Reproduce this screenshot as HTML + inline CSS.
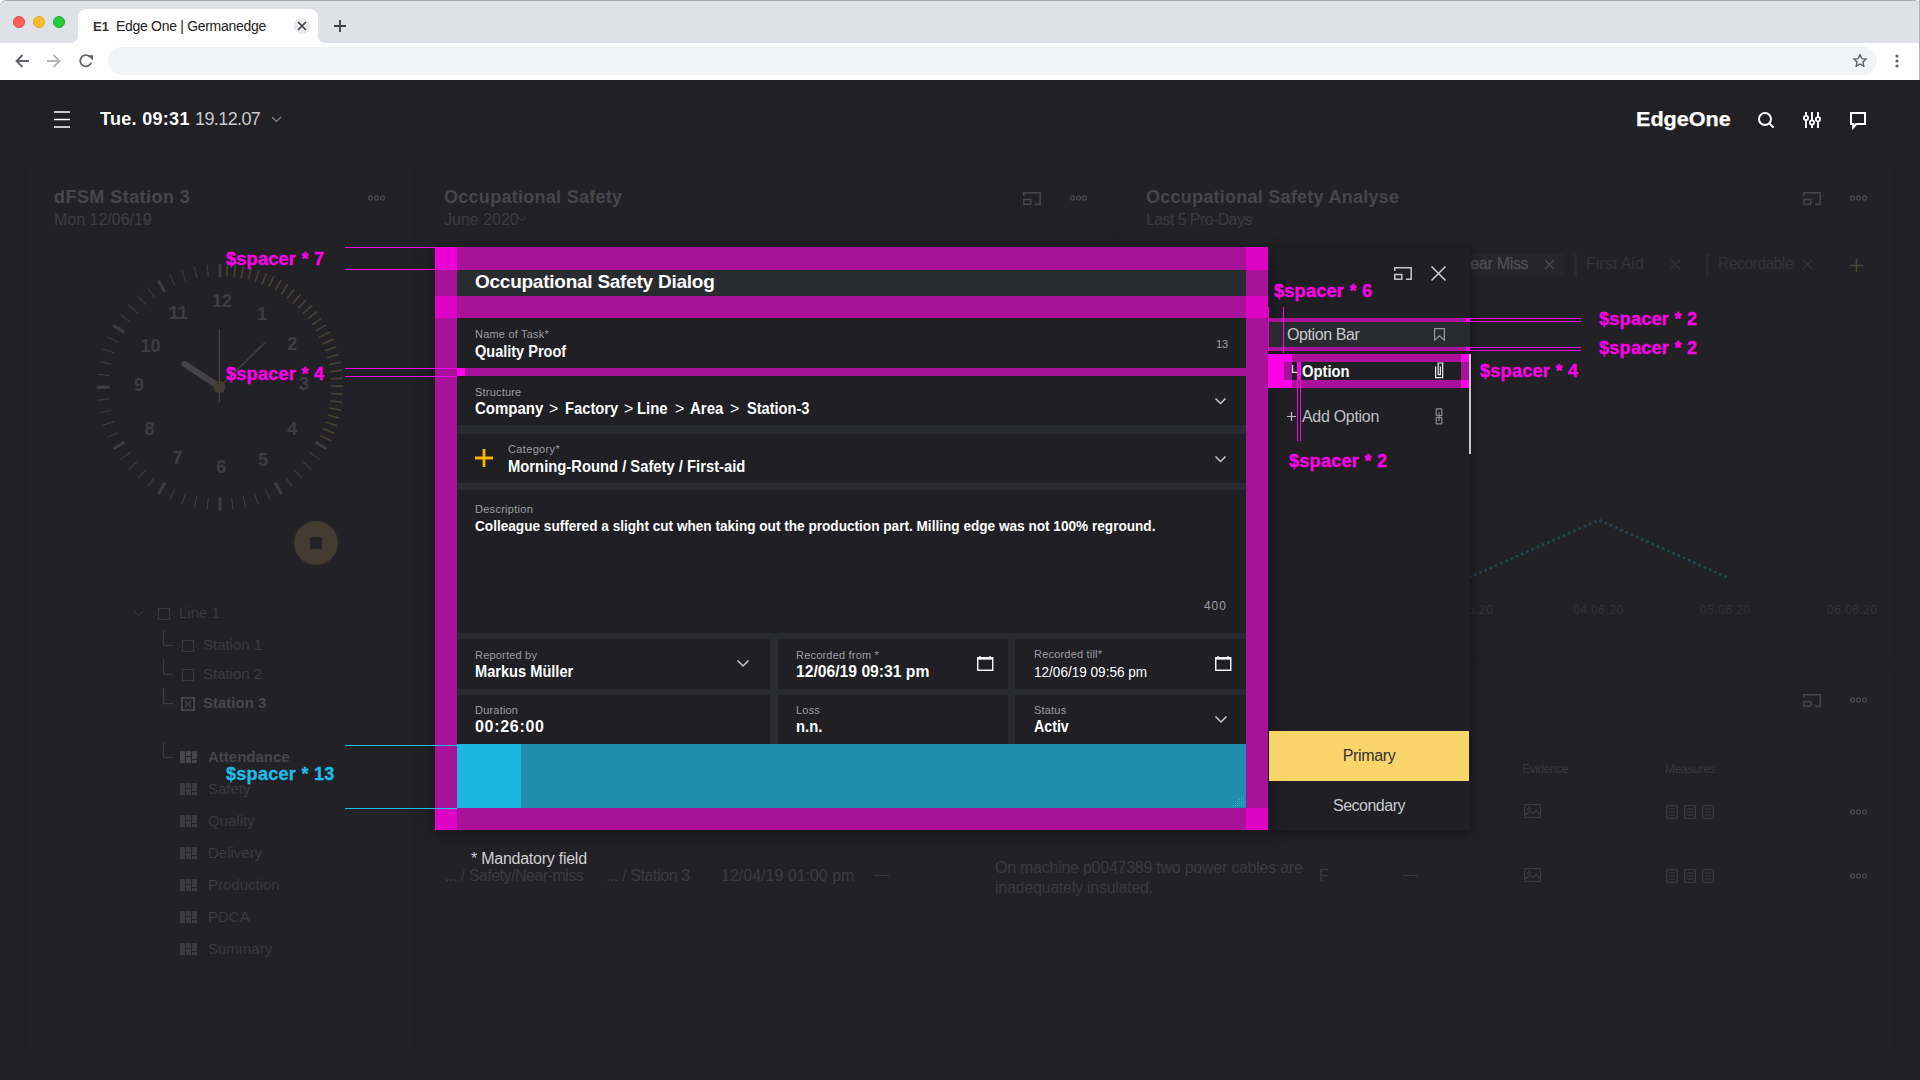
<!DOCTYPE html>
<html><head><meta charset="utf-8">
<style>
*{margin:0;padding:0;box-sizing:border-box}
html,body{width:1920px;height:1080px;overflow:hidden;background:#212025;font-family:"Liberation Sans",sans-serif}
.a{position:absolute}
.t{position:absolute;white-space:nowrap;line-height:1}
svg{position:absolute;overflow:visible}
/* chrome */
#chrome{position:absolute;left:0;top:0;width:1920px;height:80px;background:#fff;z-index:10}
#tabbar{position:absolute;left:0;top:0;width:1920px;height:43px;background:#DEE1E6;border-top:1px solid #a9a9a9;border-radius:6px 6px 0 0}
.light{position:absolute;top:15px;width:12px;height:12px;border-radius:50%}
#tab{position:absolute;left:78px;top:8px;width:240px;height:34px;background:#fff;border-radius:8px 8px 0 0}
#tab:before,#tab:after{content:"";position:absolute;bottom:0;width:8px;height:8px;background:radial-gradient(circle at 0 0,#DEE1E6 8px,#fff 8.5px)}
#tab:before{left:-8px}
#tab:after{right:-8px;background:radial-gradient(circle at 100% 0,#DEE1E6 8px,#fff 8.5px)}
#addr{position:absolute;left:108px;top:47px;width:1769px;height:28px;background:#F1F3F4;border-radius:14px}
/* app */
#app{position:absolute;left:0;top:0;width:1920px;height:1080px;background:#212025}
.panel{position:absolute;background:#222126;box-shadow:0 0 1px rgba(0,0,0,.1)}
.lbl{position:absolute;white-space:nowrap;line-height:1;font-size:11px;color:#9d9da2;letter-spacing:0.2px}
.val{position:absolute;white-space:nowrap;line-height:1;font-size:16px;color:#fff;font-weight:bold}
.field{position:absolute;background:#1f1f24}
.gap{position:absolute;background:#2a2b30}
.mg{position:absolute;background:#a8129a}
.mgb{position:absolute;background:#de04c6}
.pk{position:absolute;background:#ff00e8}
.ann{position:absolute;white-space:nowrap;line-height:1;font-size:18px;font-weight:bold;color:#ff00e8;letter-spacing:0.3px;-webkit-text-stroke:0.35px currentColor}
.dimT{position:absolute;white-space:nowrap;line-height:1;color:#47464b;font-weight:bold;font-size:18px}
.dimS{position:absolute;white-space:nowrap;line-height:1;color:#3c3b40;font-size:16px}
.tree{position:absolute;white-space:nowrap;line-height:1;color:#3b3a3f;font-size:15px}
</style></head>
<body>
<div id="chrome">
  <div id="tabbar">
    <div class="light" style="left:13px;background:#FE5F57;border:1px solid #E2463F"></div>
    <div class="light" style="left:33px;background:#FEBC2E;border:1px solid #E1A325"></div>
    <div class="light" style="left:53px;background:#28C840;border:1px solid #1DAD2B"></div>
    <div id="tab">
      <div class="t" style="left:15px;top:11px;font-size:13px;font-weight:bold;color:#333">E1</div>
      <div class="t" style="left:38px;top:10px;font-size:14px;color:#222;letter-spacing:-0.3px">Edge One | Germanedge</div>
      <div class="a" style="left:216px;top:9px;width:16px;height:16px;border-radius:50%;background:#E8EAED"></div>
      <svg style="left:220px;top:13px" width="8" height="8"><path d="M0 0L8 8M8 0L0 8" stroke="#3c4043" stroke-width="1.6"/></svg>
    </div>
    <svg style="left:334px;top:19px" width="12" height="12"><path d="M6 0V12M0 6H12" stroke="#3c4043" stroke-width="1.8"/></svg>
  </div>
  <div id="addr"></div>
  <div class="a" style="left:1919px;top:0;width:1px;height:80px;background:#b3b3b3"></div>
  <svg style="left:15px;top:54px" width="14" height="14"><path d="M14 7H1.5M7.5 1L1.5 7L7.5 13" fill="none" stroke="#5f6368" stroke-width="1.8"/></svg>
  <svg style="left:47px;top:54px" width="14" height="14"><path d="M0 7H12.5M6.5 1L12.5 7L6.5 13" fill="none" stroke="#b4b6b9" stroke-width="1.8"/></svg>
  <svg style="left:79px;top:54px" width="14" height="14"><path d="M12.2 8.5A5.6 5.6 0 1 1 10.8 2.8" fill="none" stroke="#5f6368" stroke-width="1.8"/><path d="M8.6 1.2H14V6.6Z" fill="#5f6368"/></svg>
  <svg style="left:1852px;top:53px" width="16" height="16"><path d="M8 1.5L9.9 5.6L14.2 6L10.9 8.9L11.9 13.3L8 11L4.1 13.3L5.1 8.9L1.8 6L6.1 5.6Z" fill="none" stroke="#5f6368" stroke-width="1.4" stroke-linejoin="round"/></svg>
  <svg style="left:1895px;top:54px" width="4" height="14"><circle cx="2" cy="2" r="1.6" fill="#5f6368"/><circle cx="2" cy="7" r="1.6" fill="#5f6368"/><circle cx="2" cy="12" r="1.6" fill="#5f6368"/></svg>
</div>
<div id="app">
<svg style="left:54px;top:111px" width="16" height="17"><path d="M0 1H16M0 8.5H16M0 16H16" stroke="#fff" stroke-width="1.6"/></svg>
<div class="t" style="left:100px;top:110px;font-size:18px;font-weight:bold;color:#fff;letter-spacing:0.3px">Tue. 09:31</div>
<div class="t" style="left:195px;top:110px;font-size:18px;color:#c9c9cc;letter-spacing:-0.6px">19.12.07</div>
<svg style="left:272px;top:117px" width="9" height="5"><path d="M0 0L4.5 4.5L9 0" fill="none" stroke="#8a8a8e" stroke-width="1.1"/></svg>
<div class="t" style="left:1636px;top:109px;font-size:20px;font-weight:bold;color:#fff;transform:scaleX(1.08);transform-origin:0 0;-webkit-text-stroke:0.25px #fff">EdgeOne</div>
<svg style="left:1758px;top:112px" width="17" height="17"><circle cx="7" cy="7" r="6" fill="none" stroke="#fff" stroke-width="2"/><path d="M11.4 11.4L15.6 15.6" stroke="#fff" stroke-width="2"/></svg>
<svg style="left:1803px;top:112px" width="18" height="16"><path d="M3 0V16M9 0V16M15 0V16" stroke="#fff" stroke-width="1.9"/><circle cx="3" cy="6" r="2.1" fill="#212025" stroke="#fff" stroke-width="1.8"/><circle cx="9" cy="10.4" r="2.1" fill="#212025" stroke="#fff" stroke-width="1.8"/><circle cx="15" cy="7.2" r="2.1" fill="#212025" stroke="#fff" stroke-width="1.8"/></svg>
<svg style="left:1850px;top:112px" width="16" height="17"><path d="M1 1H15V12H6.2L3.2 15.5V12H1Z" fill="none" stroke="#fff" stroke-width="2" stroke-linejoin="miter"/></svg>

<div class="panel" style="left:27px;top:164px;width:385px;height:888px"></div>
<div class="panel" style="left:418px;top:164px;width:694px;height:495px"></div>
<div class="panel" style="left:1120px;top:164px;width:772px;height:495px"></div>
<div class="panel" style="left:418px;top:666px;width:1474px;height:386px"></div>
<!-- left panel content -->
<div class="dimT" style="left:54px;top:188px;letter-spacing:0.45px">dFSM Station 3</div>
<div class="dimS" style="left:54px;top:212px;color:#3e3d42">Mon 12/06/19</div>
<svg style="left:143px;top:219px" width="8" height="5"><path d="M0 0L4 4L8 0" fill="none" stroke="#3e3d42" stroke-width="1"/></svg>
<svg style="left:368px;top:195px" width="17" height="6"><circle cx="2.5" cy="3" r="2" fill="none" stroke="#47464b" stroke-width="1.3"/><circle cx="8.5" cy="3" r="2" fill="none" stroke="#47464b" stroke-width="1.3"/><circle cx="14.5" cy="3" r="2" fill="none" stroke="#47464b" stroke-width="1.3"/></svg>
<svg id="clock" style="left:0;top:0" width="440" height="600"><line x1="220.00" y1="277.00" x2="220.00" y2="264.00" stroke="#3e3d42" stroke-width="3.0"/><line x1="315.44" y1="442.30" x2="326.69" y2="448.80" stroke="#3e3d42" stroke-width="3.0"/><line x1="309.96" y1="452.56" x2="319.67" y2="459.62" stroke="#3e3d42" stroke-width="1.1"/><line x1="302.64" y1="461.61" x2="311.56" y2="469.64" stroke="#3e3d42" stroke-width="1.1"/><line x1="294.41" y1="469.84" x2="302.44" y2="478.76" stroke="#3e3d42" stroke-width="1.1"/><line x1="285.36" y1="477.16" x2="292.42" y2="486.87" stroke="#3e3d42" stroke-width="1.1"/><line x1="275.10" y1="482.64" x2="281.60" y2="493.89" stroke="#3e3d42" stroke-width="3.0"/><line x1="265.23" y1="488.79" x2="270.11" y2="499.75" stroke="#3e3d42" stroke-width="1.1"/><line x1="254.36" y1="492.96" x2="258.07" y2="504.37" stroke="#3e3d42" stroke-width="1.1"/><line x1="243.12" y1="495.97" x2="245.61" y2="507.71" stroke="#3e3d42" stroke-width="1.1"/><line x1="231.62" y1="497.79" x2="232.88" y2="509.73" stroke="#3e3d42" stroke-width="1.1"/><line x1="220.00" y1="497.40" x2="220.00" y2="510.40" stroke="#3e3d42" stroke-width="3.0"/><line x1="208.38" y1="497.79" x2="207.12" y2="509.73" stroke="#3e3d42" stroke-width="1.1"/><line x1="196.88" y1="495.97" x2="194.39" y2="507.71" stroke="#3e3d42" stroke-width="1.1"/><line x1="185.64" y1="492.96" x2="181.93" y2="504.37" stroke="#3e3d42" stroke-width="1.1"/><line x1="174.77" y1="488.79" x2="169.89" y2="499.75" stroke="#3e3d42" stroke-width="1.1"/><line x1="164.90" y1="482.64" x2="158.40" y2="493.89" stroke="#3e3d42" stroke-width="3.0"/><line x1="154.64" y1="477.16" x2="147.58" y2="486.87" stroke="#3e3d42" stroke-width="1.1"/><line x1="145.59" y1="469.84" x2="137.56" y2="478.76" stroke="#3e3d42" stroke-width="1.1"/><line x1="137.36" y1="461.61" x2="128.44" y2="469.64" stroke="#3e3d42" stroke-width="1.1"/><line x1="130.04" y1="452.56" x2="120.33" y2="459.62" stroke="#3e3d42" stroke-width="1.1"/><line x1="124.56" y1="442.30" x2="113.31" y2="448.80" stroke="#3e3d42" stroke-width="3.0"/><line x1="118.41" y1="432.43" x2="107.45" y2="437.31" stroke="#3e3d42" stroke-width="1.1"/><line x1="114.24" y1="421.56" x2="102.83" y2="425.27" stroke="#3e3d42" stroke-width="1.1"/><line x1="111.23" y1="410.32" x2="99.49" y2="412.81" stroke="#3e3d42" stroke-width="1.1"/><line x1="109.41" y1="398.82" x2="97.47" y2="400.08" stroke="#3e3d42" stroke-width="1.1"/><line x1="109.80" y1="387.20" x2="96.80" y2="387.20" stroke="#3e3d42" stroke-width="3.0"/><line x1="109.41" y1="375.58" x2="97.47" y2="374.32" stroke="#3e3d42" stroke-width="1.1"/><line x1="111.23" y1="364.08" x2="99.49" y2="361.59" stroke="#3e3d42" stroke-width="1.1"/><line x1="114.24" y1="352.84" x2="102.83" y2="349.13" stroke="#3e3d42" stroke-width="1.1"/><line x1="118.41" y1="341.97" x2="107.45" y2="337.09" stroke="#3e3d42" stroke-width="1.1"/><line x1="124.56" y1="332.10" x2="113.31" y2="325.60" stroke="#3e3d42" stroke-width="3.0"/><line x1="130.04" y1="321.84" x2="120.33" y2="314.78" stroke="#3e3d42" stroke-width="1.1"/><line x1="137.36" y1="312.79" x2="128.44" y2="304.76" stroke="#3e3d42" stroke-width="1.1"/><line x1="145.59" y1="304.56" x2="137.56" y2="295.64" stroke="#3e3d42" stroke-width="1.1"/><line x1="154.64" y1="297.24" x2="147.58" y2="287.53" stroke="#3e3d42" stroke-width="1.1"/><line x1="164.90" y1="291.76" x2="158.40" y2="280.51" stroke="#3e3d42" stroke-width="3.0"/><line x1="174.77" y1="285.61" x2="169.89" y2="274.65" stroke="#3e3d42" stroke-width="1.1"/><line x1="185.64" y1="281.44" x2="181.93" y2="270.03" stroke="#3e3d42" stroke-width="1.1"/><line x1="196.88" y1="278.43" x2="194.39" y2="266.69" stroke="#3e3d42" stroke-width="1.1"/><line x1="208.38" y1="276.61" x2="207.12" y2="264.67" stroke="#3e3d42" stroke-width="1.1"/><line x1="226.79" y1="276.21" x2="227.52" y2="264.23" stroke="#4a4333" stroke-width="1.6"/><line x1="234.01" y1="276.89" x2="235.53" y2="264.98" stroke="#4a4333" stroke-width="1.6"/><line x1="241.18" y1="278.04" x2="243.47" y2="266.26" stroke="#4a4333" stroke-width="1.6"/><line x1="248.26" y1="279.65" x2="251.30" y2="268.04" stroke="#4a4333" stroke-width="1.6"/><line x1="255.21" y1="281.72" x2="259.01" y2="270.34" stroke="#4a4333" stroke-width="1.6"/><line x1="262.02" y1="284.24" x2="266.55" y2="273.13" stroke="#4a4333" stroke-width="1.6"/><line x1="268.64" y1="287.20" x2="273.89" y2="276.41" stroke="#4a4333" stroke-width="1.6"/><line x1="275.06" y1="290.59" x2="281.00" y2="280.16" stroke="#4a4333" stroke-width="1.6"/><line x1="281.25" y1="294.39" x2="287.86" y2="284.37" stroke="#4a4333" stroke-width="1.6"/><line x1="287.17" y1="298.58" x2="294.42" y2="289.02" stroke="#4a4333" stroke-width="1.6"/><line x1="292.81" y1="303.15" x2="300.66" y2="294.08" stroke="#4a4333" stroke-width="1.6"/><line x1="298.13" y1="308.08" x2="306.57" y2="299.54" stroke="#4a4333" stroke-width="1.6"/><line x1="303.13" y1="313.34" x2="312.10" y2="305.37" stroke="#4a4333" stroke-width="1.6"/><line x1="307.77" y1="318.92" x2="317.24" y2="311.55" stroke="#4a4333" stroke-width="1.6"/><line x1="312.04" y1="324.79" x2="321.97" y2="318.06" stroke="#4a4333" stroke-width="1.6"/><line x1="315.91" y1="330.93" x2="326.26" y2="324.86" stroke="#4a4333" stroke-width="1.6"/><line x1="319.38" y1="337.31" x2="330.10" y2="331.92" stroke="#4a4333" stroke-width="1.6"/><line x1="322.42" y1="343.89" x2="333.47" y2="339.22" stroke="#4a4333" stroke-width="1.6"/><line x1="325.03" y1="350.67" x2="336.36" y2="346.72" stroke="#4a4333" stroke-width="1.6"/><line x1="327.19" y1="357.60" x2="338.75" y2="354.40" stroke="#4a4333" stroke-width="1.6"/><line x1="328.89" y1="364.65" x2="340.64" y2="362.22" stroke="#4a4333" stroke-width="1.6"/><line x1="330.13" y1="371.80" x2="342.01" y2="370.14" stroke="#4a4333" stroke-width="1.6"/><line x1="330.90" y1="379.02" x2="342.87" y2="378.13" stroke="#4a4333" stroke-width="1.6"/><line x1="331.20" y1="386.27" x2="343.20" y2="386.17" stroke="#4a4333" stroke-width="1.6"/><line x1="331.02" y1="393.52" x2="343.00" y2="394.21" stroke="#4a4333" stroke-width="1.6"/><line x1="330.37" y1="400.75" x2="342.28" y2="402.21" stroke="#4a4333" stroke-width="1.6"/><line x1="329.25" y1="407.92" x2="341.04" y2="410.16" stroke="#4a4333" stroke-width="1.6"/><line x1="327.67" y1="415.00" x2="339.29" y2="418.01" stroke="#4a4333" stroke-width="1.6"/><line x1="325.62" y1="421.97" x2="337.02" y2="425.72" stroke="#4a4333" stroke-width="1.6"/><line x1="323.13" y1="428.78" x2="334.26" y2="433.27" stroke="#4a4333" stroke-width="1.6"/><line x1="320.20" y1="435.42" x2="331.01" y2="440.63" stroke="#4a4333" stroke-width="1.6"/><text x="222.0" y="307.1" text-anchor="middle" font-family="Liberation Sans" font-weight="bold" font-size="18" fill="#3e3d42">12</text><text x="178.3" y="319.2" text-anchor="middle" font-family="Liberation Sans" font-weight="bold" font-size="18" fill="#3e3d42">11</text><text x="150.5" y="351.9" text-anchor="middle" font-family="Liberation Sans" font-weight="bold" font-size="18" fill="#3e3d42">10</text><text x="138.9" y="391.0" text-anchor="middle" font-family="Liberation Sans" font-weight="bold" font-size="18" fill="#3e3d42">9</text><text x="262.2" y="319.9" text-anchor="middle" font-family="Liberation Sans" font-weight="bold" font-size="18" fill="#3e3d42">1</text><text x="292.2" y="349.9" text-anchor="middle" font-family="Liberation Sans" font-weight="bold" font-size="18" fill="#3e3d42">2</text><text x="303.9" y="389.9" text-anchor="middle" font-family="Liberation Sans" font-weight="bold" font-size="18" fill="#3e3d42">3</text><text x="292.2" y="435.1" text-anchor="middle" font-family="Liberation Sans" font-weight="bold" font-size="18" fill="#3e3d42">4</text><text x="263.3" y="466.2" text-anchor="middle" font-family="Liberation Sans" font-weight="bold" font-size="18" fill="#3e3d42">5</text><text x="221.2" y="472.9" text-anchor="middle" font-family="Liberation Sans" font-weight="bold" font-size="18" fill="#3e3d42">6</text><text x="177.6" y="464.3" text-anchor="middle" font-family="Liberation Sans" font-weight="bold" font-size="18" fill="#3e3d42">7</text><text x="149.6" y="435.0" text-anchor="middle" font-family="Liberation Sans" font-weight="bold" font-size="18" fill="#3e3d42">8</text><line x1="219.4" y1="386.9" x2="184.4" y2="363.9" stroke="#444349" stroke-width="6.2" stroke-linecap="round"/><line x1="219.4" y1="386.9" x2="266.1" y2="341.7" stroke="#404045" stroke-width="1.5"/><line x1="219.4" y1="328.9" x2="219.4" y2="402.4" stroke="#4a4232" stroke-width="1.2"/><circle cx="219.4" cy="386.9" r="6" fill="#433b2f"/></svg>
<div class="a" style="left:294px;top:521px;width:44px;height:44px;border-radius:50%;background:#433b2f"></div>
<div class="a" style="left:310px;top:537px;width:12px;height:12px;background:#222126"></div>
<!-- tree -->
<svg style="left:134px;top:611px" width="9" height="5"><path d="M0 0L4.5 4.5L9 0" fill="none" stroke="#3b3a3f" stroke-width="1"/></svg>
<div class="a" style="left:158px;top:608px;width:12px;height:12px;border:1.3px solid #3b3a3f"></div>
<div class="tree" style="left:179px;top:605px">Line 1</div>
<svg style="left:163px;top:630px" width="10" height="16"><path d="M0.6 0V15.4H10" fill="none" stroke="#3b3a3f" stroke-width="1.2"/></svg>
<div class="a" style="left:182px;top:640px;width:12px;height:12px;border:1.3px solid #3b3a3f"></div>
<div class="tree" style="left:203px;top:637px">Station 1</div>
<svg style="left:163px;top:659px" width="10" height="16"><path d="M0.6 0V15.4H10" fill="none" stroke="#3b3a3f" stroke-width="1.2"/></svg>
<div class="a" style="left:182px;top:669px;width:12px;height:12px;border:1.3px solid #3b3a3f"></div>
<div class="tree" style="left:203px;top:666px">Station 2</div>
<svg style="left:163px;top:688px" width="10" height="16"><path d="M0.6 0V15.4H10" fill="none" stroke="#3f3e43" stroke-width="1.5"/></svg>
<svg style="left:181px;top:697px" width="14" height="14"><rect x="0.8" y="0.8" width="12.4" height="12.4" fill="none" stroke="#47464b" stroke-width="1.6"/><path d="M4 4L10 10M10 4L4 10" stroke="#47464b" stroke-width="1.3"/></svg>
<div class="tree" style="left:203px;top:695px;font-weight:bold;color:#47464b">Station 3</div>
<svg style="left:163px;top:742px" width="10" height="16"><path d="M0.6 0V15.4H10" fill="none" stroke="#3b3a3f" stroke-width="1.2"/></svg>
<svg style="left:180px;top:751px" width="17" height="12"><rect x="0" y="0" width="5" height="12" fill="#47464b"/><rect x="6" y="0" width="5" height="5" fill="#47464b"/><rect x="6" y="6" width="5" height="6" fill="#47464b"/><rect x="12" y="0" width="5" height="8" fill="#47464b"/><rect x="12" y="9" width="5" height="3" fill="#47464b"/></svg><div class="tree" style="left:208px;top:749px;font-weight:bold;color:#47464b">Attendance</div><svg style="left:180px;top:783px" width="17" height="12"><rect x="0" y="0" width="5" height="12" fill="#3b3a3f"/><rect x="6" y="0" width="5" height="5" fill="#3b3a3f"/><rect x="6" y="6" width="5" height="6" fill="#3b3a3f"/><rect x="12" y="0" width="5" height="8" fill="#3b3a3f"/><rect x="12" y="9" width="5" height="3" fill="#3b3a3f"/></svg><div class="tree" style="left:208px;top:781px;font-weight:normal;color:#3b3a3f">Safety</div><svg style="left:180px;top:815px" width="17" height="12"><rect x="0" y="0" width="5" height="12" fill="#3b3a3f"/><rect x="6" y="0" width="5" height="5" fill="#3b3a3f"/><rect x="6" y="6" width="5" height="6" fill="#3b3a3f"/><rect x="12" y="0" width="5" height="8" fill="#3b3a3f"/><rect x="12" y="9" width="5" height="3" fill="#3b3a3f"/></svg><div class="tree" style="left:208px;top:813px;font-weight:normal;color:#3b3a3f">Quality</div><svg style="left:180px;top:847px" width="17" height="12"><rect x="0" y="0" width="5" height="12" fill="#3b3a3f"/><rect x="6" y="0" width="5" height="5" fill="#3b3a3f"/><rect x="6" y="6" width="5" height="6" fill="#3b3a3f"/><rect x="12" y="0" width="5" height="8" fill="#3b3a3f"/><rect x="12" y="9" width="5" height="3" fill="#3b3a3f"/></svg><div class="tree" style="left:208px;top:845px;font-weight:normal;color:#3b3a3f">Delivery</div><svg style="left:180px;top:879px" width="17" height="12"><rect x="0" y="0" width="5" height="12" fill="#3b3a3f"/><rect x="6" y="0" width="5" height="5" fill="#3b3a3f"/><rect x="6" y="6" width="5" height="6" fill="#3b3a3f"/><rect x="12" y="0" width="5" height="8" fill="#3b3a3f"/><rect x="12" y="9" width="5" height="3" fill="#3b3a3f"/></svg><div class="tree" style="left:208px;top:877px;font-weight:normal;color:#3b3a3f">Production</div><svg style="left:180px;top:911px" width="17" height="12"><rect x="0" y="0" width="5" height="12" fill="#3b3a3f"/><rect x="6" y="0" width="5" height="5" fill="#3b3a3f"/><rect x="6" y="6" width="5" height="6" fill="#3b3a3f"/><rect x="12" y="0" width="5" height="8" fill="#3b3a3f"/><rect x="12" y="9" width="5" height="3" fill="#3b3a3f"/></svg><div class="tree" style="left:208px;top:909px;font-weight:normal;color:#3b3a3f">PDCA</div><svg style="left:180px;top:943px" width="17" height="12"><rect x="0" y="0" width="5" height="12" fill="#3b3a3f"/><rect x="6" y="0" width="5" height="5" fill="#3b3a3f"/><rect x="6" y="6" width="5" height="6" fill="#3b3a3f"/><rect x="12" y="0" width="5" height="8" fill="#3b3a3f"/><rect x="12" y="9" width="5" height="3" fill="#3b3a3f"/></svg><div class="tree" style="left:208px;top:941px;font-weight:normal;color:#3b3a3f">Summary</div>
<!-- middle panel content -->
<div class="dimT" style="left:444px;top:188px;letter-spacing:0.28px">Occupational Safety</div>
<div class="dimS" style="left:444px;top:212px">June 2020</div>
<svg style="left:518px;top:217px" width="8" height="5"><path d="M0 0L4 4L8 0" fill="none" stroke="#3e3d42" stroke-width="1"/></svg>
<svg style="left:1023px;top:192px" width="18" height="13"><path d="M0.8 4V0.8H17.2V12.2H12" fill="none" stroke="#47464b" stroke-width="1.5"/><rect x="0.8" y="7.5" width="7" height="4.7" fill="none" stroke="#47464b" stroke-width="1.5"/></svg>
<svg style="left:1070px;top:195px" width="17" height="6"><circle cx="2.5" cy="3" r="2" fill="none" stroke="#47464b" stroke-width="1.3"/><circle cx="8.5" cy="3" r="2" fill="none" stroke="#47464b" stroke-width="1.3"/><circle cx="14.5" cy="3" r="2" fill="none" stroke="#47464b" stroke-width="1.3"/></svg>
<div class="dimS" style="left:445px;top:868px;color:#3b3a3f;letter-spacing:-0.5px">... / Safety/Near-miss</div>
<div class="dimS" style="left:606px;top:868px;color:#3b3a3f;letter-spacing:-0.4px">... / Station 3</div>
<div class="dimS" style="left:721px;top:868px;color:#3b3a3f">12/04/19 01:00 pm</div>
<div class="a" style="left:874px;top:875px;width:15px;height:1.3px;background:#3b3a3f"></div>
<div class="dimS" style="left:995px;top:860px;color:#3b3a3f;letter-spacing:-0.25px">On machine p0047389 two power cables are</div>
<div class="dimS" style="left:995px;top:880px;color:#3b3a3f;letter-spacing:-0.25px">inadequately insulated.</div>
<div class="dimS" style="left:1319px;top:868px;color:#3b3a3f">F</div>
<div class="a" style="left:1403px;top:875px;width:15px;height:1.3px;background:#3b3a3f"></div>
<!-- right panel content -->
<div class="dimT" style="left:1146px;top:188px;letter-spacing:0.25px">Occupational Safety Analyse</div>
<div class="dimS" style="left:1146px;top:212px;letter-spacing:-0.6px">Last 5 Pro-Days</div>
<svg style="left:1245px;top:218px" width="8" height="5"><path d="M0 0L4 4L8 0" fill="none" stroke="#3e3d42" stroke-width="1"/></svg>
<svg style="left:1803px;top:192px" width="18" height="13"><path d="M0.8 4V0.8H17.2V12.2H12" fill="none" stroke="#47464b" stroke-width="1.5"/><rect x="0.8" y="7.5" width="7" height="4.7" fill="none" stroke="#47464b" stroke-width="1.5"/></svg>
<svg style="left:1850px;top:195px" width="17" height="6"><circle cx="2.5" cy="3" r="2" fill="none" stroke="#47464b" stroke-width="1.3"/><circle cx="8.5" cy="3" r="2" fill="none" stroke="#47464b" stroke-width="1.3"/><circle cx="14.5" cy="3" r="2" fill="none" stroke="#47464b" stroke-width="1.3"/></svg>
<div class="a" style="left:1440px;top:254px;width:124px;height:23px;background:#262529"></div>
<div class="dimS" style="left:1459px;top:256px;color:#4f4e53;font-size:16px;-webkit-text-stroke:0.3px #4f4e53;letter-spacing:-0.3px">Near Miss</div>
<svg style="left:1545px;top:260px" width="9" height="9"><path d="M0 0L9 9M9 0L0 9" stroke="#4b4a4f" stroke-width="1.3"/></svg>
<div class="a" style="left:1574px;top:254px;width:3px;height:23px;background:#2a292e"></div>
<div class="dimS" style="left:1586px;top:256px;color:#343338">First Aid</div>
<svg style="left:1671px;top:260px" width="9" height="9"><path d="M0 0L9 9M9 0L0 9" stroke="#343338" stroke-width="1.3"/></svg>
<div class="a" style="left:1706px;top:254px;width:3px;height:23px;background:#2a292e"></div>
<div class="dimS" style="left:1718px;top:256px;color:#343338;letter-spacing:-0.7px">Recordable</div>
<svg style="left:1803px;top:260px" width="9" height="9"><path d="M0 0L9 9M9 0L0 9" stroke="#343338" stroke-width="1.3"/></svg>
<svg style="left:1850px;top:259px" width="13" height="13"><path d="M6.5 0V13M0 6.5H13" stroke="#4a4535" stroke-width="1.6"/></svg>
<svg style="left:1460px;top:500px" width="440" height="100"><polyline points="10,77 139,20 266.5,77" fill="none" stroke="#1f4852" stroke-width="3" stroke-dasharray="0.01 5.7" stroke-linecap="round"/></svg>
<div class="t" style="left:1468px;top:604px;font-size:12px;color:#333237;letter-spacing:0.5px">6.20</div>
<div class="t" style="left:1573px;top:604px;font-size:12px;color:#333237;letter-spacing:0.5px">04.06.20</div>
<div class="t" style="left:1700px;top:604px;font-size:12px;color:#333237;letter-spacing:0.5px">05.06.20</div>
<div class="t" style="left:1827px;top:604px;font-size:12px;color:#333237;letter-spacing:0.5px">06.06.20</div>
<svg style="left:1803px;top:694px" width="18" height="13"><path d="M0.8 4V0.8H17.2V12.2H12" fill="none" stroke="#47464b" stroke-width="1.5"/><rect x="0.8" y="7.5" width="7" height="4.7" fill="none" stroke="#47464b" stroke-width="1.5"/></svg>
<svg style="left:1850px;top:697px" width="17" height="6"><circle cx="2.5" cy="3" r="2" fill="none" stroke="#47464b" stroke-width="1.3"/><circle cx="8.5" cy="3" r="2" fill="none" stroke="#47464b" stroke-width="1.3"/><circle cx="14.5" cy="3" r="2" fill="none" stroke="#47464b" stroke-width="1.3"/></svg>
<div class="t" style="left:1522px;top:763px;font-size:12px;color:#38373c;letter-spacing:-0.4px">Evidence</div>
<div class="t" style="left:1665px;top:763px;font-size:12px;color:#38373c;letter-spacing:-0.3px">Measures</div>
<svg style="left:1524px;top:804px" width="17" height="14"><rect x="0.6" y="0.6" width="15.8" height="12.8" fill="none" stroke="#3b3a3f" stroke-width="1.2"/><circle cx="5" cy="5" r="1.4" fill="none" stroke="#3b3a3f" stroke-width="1"/><path d="M1 11L6 7.5L9 9.5L12 6.5L16 10" fill="none" stroke="#3b3a3f" stroke-width="1.1"/></svg><svg style="left:1666px;top:805px" width="12" height="14"><rect x="0.6" y="0.6" width="10.8" height="12.8" rx="1" fill="none" stroke="#3b3a3f" stroke-width="1.2"/><path d="M3 4H9M3 7H9M3 10H9" stroke="#3b3a3f" stroke-width="1"/></svg><svg style="left:1684px;top:805px" width="12" height="14"><rect x="0.6" y="0.6" width="10.8" height="12.8" rx="1" fill="none" stroke="#3b3a3f" stroke-width="1.2"/><path d="M3 4H9M3 7H9M3 10H9" stroke="#3b3a3f" stroke-width="1"/></svg><svg style="left:1702px;top:805px" width="12" height="14"><rect x="0.6" y="0.6" width="10.8" height="12.8" rx="1" fill="none" stroke="#3b3a3f" stroke-width="1.2"/><path d="M3 4H9M3 7H9M3 10H9" stroke="#3b3a3f" stroke-width="1"/></svg><svg style="left:1850px;top:809px" width="17" height="6"><circle cx="2.5" cy="3" r="2" fill="none" stroke="#47464b" stroke-width="1.3"/><circle cx="8.5" cy="3" r="2" fill="none" stroke="#47464b" stroke-width="1.3"/><circle cx="14.5" cy="3" r="2" fill="none" stroke="#47464b" stroke-width="1.3"/></svg><svg style="left:1524px;top:868px" width="17" height="14"><rect x="0.6" y="0.6" width="15.8" height="12.8" fill="none" stroke="#3b3a3f" stroke-width="1.2"/><circle cx="5" cy="5" r="1.4" fill="none" stroke="#3b3a3f" stroke-width="1"/><path d="M1 11L6 7.5L9 9.5L12 6.5L16 10" fill="none" stroke="#3b3a3f" stroke-width="1.1"/></svg><svg style="left:1666px;top:869px" width="12" height="14"><rect x="0.6" y="0.6" width="10.8" height="12.8" rx="1" fill="none" stroke="#3b3a3f" stroke-width="1.2"/><path d="M3 4H9M3 7H9M3 10H9" stroke="#3b3a3f" stroke-width="1"/></svg><svg style="left:1684px;top:869px" width="12" height="14"><rect x="0.6" y="0.6" width="10.8" height="12.8" rx="1" fill="none" stroke="#3b3a3f" stroke-width="1.2"/><path d="M3 4H9M3 7H9M3 10H9" stroke="#3b3a3f" stroke-width="1"/></svg><svg style="left:1702px;top:869px" width="12" height="14"><rect x="0.6" y="0.6" width="10.8" height="12.8" rx="1" fill="none" stroke="#3b3a3f" stroke-width="1.2"/><path d="M3 4H9M3 7H9M3 10H9" stroke="#3b3a3f" stroke-width="1"/></svg><svg style="left:1850px;top:873px" width="17" height="6"><circle cx="2.5" cy="3" r="2" fill="none" stroke="#47464b" stroke-width="1.3"/><circle cx="8.5" cy="3" r="2" fill="none" stroke="#47464b" stroke-width="1.3"/><circle cx="14.5" cy="3" r="2" fill="none" stroke="#47464b" stroke-width="1.3"/></svg>

<div class="a" style="left:1268px;top:247px;width:202px;height:583px;background:#1f1f24;box-shadow:2px 3px 10px rgba(0,0,0,.4)"></div>
<!-- dialog frame -->
<div class="mg" style="left:435px;top:247px;width:833px;height:583px;box-shadow:0 4px 16px rgba(0,0,0,.35)"></div>
<div class="mgb" style="left:435px;top:247px;width:22px;height:23px;background:#ec00d7"></div>
<div class="mgb" style="left:1246px;top:247px;width:22px;height:23px"></div>
<div class="mgb" style="left:435px;top:296px;width:22px;height:22px"></div>
<div class="mgb" style="left:1246px;top:296px;width:22px;height:22px"></div>
<div class="mgb" style="left:435px;top:808px;width:22px;height:22px"></div>
<div class="mgb" style="left:1246px;top:808px;width:22px;height:22px"></div>
<!-- title bar -->
<div class="gap" style="left:457px;top:270px;width:789px;height:26px"></div>
<div class="t" style="left:475px;top:272px;font-size:19px;font-weight:bold;color:#fff;letter-spacing:-0.25px">Occupational Safety Dialog</div>
<!-- name of task -->
<div class="field" style="left:457px;top:318px;width:789px;height:50px"></div>
<div class="lbl" style="left:475px;top:329px;letter-spacing:0.2px">Name of Task*</div>
<div class="val" style="left:475px;top:344px;transform:scaleX(0.907);transform-origin:0 0">Quality Proof</div>
<div class="t" style="left:1216px;top:339px;font-size:11px;color:#a0a0a5">13</div>
<div class="pk" style="left:457px;top:368px;width:8px;height:8px"></div>
<!-- structure -->
<div class="field" style="left:457px;top:376px;width:789px;height:49px"></div>
<div class="gap" style="left:457px;top:425px;width:789px;height:9px"></div>
<div class="lbl" style="left:475px;top:387px">Structure</div>
<div class="val" style="left:475px;top:401px;transform:scaleX(0.938);transform-origin:0 0">Company</div><div class="val" style="left:549px;top:401px;font-weight:normal">&gt;</div><div class="val" style="left:565px;top:401px;transform:scaleX(0.922);transform-origin:0 0">Factory</div><div class="val" style="left:624px;top:401px;font-weight:normal">&gt;</div><div class="val" style="left:637px;top:401px;transform:scaleX(0.932);transform-origin:0 0">Line</div><div class="val" style="left:675px;top:401px;font-weight:normal">&gt;</div><div class="val" style="left:690px;top:401px;transform:scaleX(0.937);transform-origin:0 0">Area</div><div class="val" style="left:730px;top:401px;font-weight:normal">&gt;</div><div class="val" style="left:747px;top:401px;transform:scaleX(0.912);transform-origin:0 0">Station-3</div>
<svg style="left:1215px;top:398px" width="11" height="7"><path d="M0.5 0.5L5.5 5.5L10.5 0.5" fill="none" stroke="#c8c8cc" stroke-width="1.5"/></svg>
<!-- category -->
<div class="field" style="left:457px;top:434px;width:789px;height:49px"></div>
<div class="gap" style="left:457px;top:483px;width:789px;height:7px"></div>
<svg style="left:475px;top:449px" width="18" height="18"><path d="M9 0V18M0 9H18" stroke="#F5B800" stroke-width="2.8"/></svg>
<div class="lbl" style="left:508px;top:444px;letter-spacing:0.35px">Category*</div>
<div class="val" style="left:508px;top:459px;transform:scaleX(0.924);transform-origin:0 0">Morning-Round / Safety / First-aid</div>
<svg style="left:1215px;top:456px" width="11" height="7"><path d="M0.5 0.5L5.5 5.5L10.5 0.5" fill="none" stroke="#c8c8cc" stroke-width="1.5"/></svg>
<!-- description -->
<div class="field" style="left:457px;top:490px;width:789px;height:143px"></div>
<div class="gap" style="left:457px;top:633px;width:789px;height:6px"></div>
<div class="lbl" style="left:475px;top:504px;letter-spacing:0.28px">Description</div>
<div class="val" style="left:475px;top:519px;font-size:14px;transform:scaleX(0.972);transform-origin:0 0">Colleague suffered a slight cut when taking out the production part. Milling edge was not 100% reground.</div>
<div class="t" style="left:1204px;top:600px;font-size:12px;color:#a0a0a5;letter-spacing:0.9px">400</div>
<!-- row 1 -->
<div class="gap" style="left:457px;top:639px;width:789px;height:106px"></div>
<div class="field" style="left:457px;top:639px;width:313px;height:50px"></div>
<div class="field" style="left:778px;top:639px;width:230px;height:50px"></div>
<div class="field" style="left:1015px;top:639px;width:231px;height:50px"></div>
<div class="lbl" style="left:475px;top:650px">Reported by</div>
<div class="val" style="left:475px;top:664px;transform:scaleX(0.913);transform-origin:0 0">Markus Müller</div>
<svg style="left:737px;top:660px" width="12" height="7"><path d="M0.5 0.5L6 6L11.5 0.5" fill="none" stroke="#c8c8cc" stroke-width="1.5"/></svg>
<div class="lbl" style="left:796px;top:650px">Recorded from *</div>
<div class="val" style="left:796px;top:664px;transform:scaleX(0.980);transform-origin:0 0">12/06/19 09:31 pm</div>
<svg style="left:977px;top:655px" width="17" height="16"><rect x="0.75" y="2.75" width="15" height="12.5" fill="none" stroke="#fff" stroke-width="1.4"/><path d="M0.75 3.6H15.75" stroke="#fff" stroke-width="2"/><path d="M3 1V3M13 1V3" stroke="#fff" stroke-width="1.3"/></svg>
<div class="lbl" style="left:1034px;top:649px">Recorded till*</div>
<div class="val" style="left:1034px;top:664px;font-weight:normal;font-size:15px;transform:scaleX(0.904);transform-origin:0 0">12/06/19 09:56 pm</div>
<svg style="left:1215px;top:655px" width="17" height="16"><rect x="0.75" y="2.75" width="15" height="12.5" fill="none" stroke="#fff" stroke-width="1.4"/><path d="M0.75 3.6H15.75" stroke="#fff" stroke-width="2"/><path d="M3 1V3M13 1V3" stroke="#fff" stroke-width="1.3"/></svg>
<!-- row 2 -->
<div class="field" style="left:457px;top:695px;width:313px;height:50px"></div>
<div class="field" style="left:778px;top:695px;width:230px;height:50px"></div>
<div class="field" style="left:1015px;top:695px;width:231px;height:50px"></div>
<div class="lbl" style="left:475px;top:705px">Duration</div>
<div class="val" style="left:475px;top:719px;letter-spacing:0.7px">00:26:00</div>
<div class="lbl" style="left:796px;top:705px">Loss</div>
<div class="val" style="left:796px;top:719px;transform:scaleX(0.926);transform-origin:0 0">n.n.</div>
<div class="lbl" style="left:1034px;top:705px">Status</div>
<div class="val" style="left:1034px;top:719px;transform:scaleX(0.888);transform-origin:0 0">Activ</div>
<svg style="left:1215px;top:716px" width="12" height="7"><path d="M0.5 0.5L6 6L11.5 0.5" fill="none" stroke="#c8c8cc" stroke-width="1.5"/></svg>
<!-- cyan -->
<div class="a" style="left:457px;top:744px;width:789px;height:64px;background:#1F8EAD"></div>
<div class="a" style="left:457px;top:744px;width:64px;height:64px;background:#1AB6DE"></div>
<svg style="left:1232px;top:794px" width="13" height="13"><rect x="11" y="1" width="1" height="1" fill="#3ab0cc"/><rect x="9" y="3" width="1" height="1" fill="#3ab0cc"/><rect x="11" y="3" width="1" height="1" fill="#3ab0cc"/><rect x="7" y="5" width="1" height="1" fill="#3ab0cc"/><rect x="9" y="5" width="1" height="1" fill="#3ab0cc"/><rect x="11" y="5" width="1" height="1" fill="#3ab0cc"/><rect x="5" y="7" width="1" height="1" fill="#3ab0cc"/><rect x="7" y="7" width="1" height="1" fill="#3ab0cc"/><rect x="9" y="7" width="1" height="1" fill="#3ab0cc"/><rect x="11" y="7" width="1" height="1" fill="#3ab0cc"/><rect x="3" y="9" width="1" height="1" fill="#3ab0cc"/><rect x="5" y="9" width="1" height="1" fill="#3ab0cc"/><rect x="7" y="9" width="1" height="1" fill="#3ab0cc"/><rect x="9" y="9" width="1" height="1" fill="#3ab0cc"/><rect x="11" y="9" width="1" height="1" fill="#3ab0cc"/><rect x="1" y="11" width="1" height="1" fill="#3ab0cc"/><rect x="3" y="11" width="1" height="1" fill="#3ab0cc"/><rect x="5" y="11" width="1" height="1" fill="#3ab0cc"/><rect x="7" y="11" width="1" height="1" fill="#3ab0cc"/><rect x="9" y="11" width="1" height="1" fill="#3ab0cc"/><rect x="11" y="11" width="1" height="1" fill="#3ab0cc"/></svg>
<div class="t" style="left:471px;top:851px;font-size:16px;color:#cfcfd2;letter-spacing:-0.25px">* Mandatory field</div>


<svg style="left:1394px;top:267px" width="18" height="13"><path d="M0.8 4V0.8H17.2V12.2H12" fill="none" stroke="#c8c8cc" stroke-width="1.5"/><rect x="0.8" y="7.5" width="7" height="4.7" fill="none" stroke="#c8c8cc" stroke-width="1.5"/></svg>
<svg style="left:1431px;top:266px" width="15" height="15"><path d="M0.5 0.5L14.5 14.5M14.5 0.5L0.5 14.5" stroke="#d0d0d3" stroke-width="1.5"/></svg>
<div class="mg" style="left:1268px;top:318px;width:202px;height:4px"></div>
<div class="gap" style="left:1268px;top:322px;width:202px;height:25px"></div>
<div class="mg" style="left:1268px;top:347px;width:202px;height:4px"></div>
<div class="t" style="left:1287px;top:327px;font-size:16px;color:#c8c8cc;letter-spacing:-0.4px">Option Bar</div>
<svg style="left:1434px;top:328px" width="11" height="13"><path d="M0.6 0.6H10.4V12.4L5.5 7.8L0.6 12.4Z" fill="none" stroke="#9a9a9e" stroke-width="1.2" stroke-linejoin="round"/></svg>
<!-- option row -->
<div class="mg" style="left:1268px;top:354px;width:201px;height:34px"></div>
<div class="pk" style="left:1268px;top:354px;width:24px;height:34px"></div>
<div class="pk" style="left:1461px;top:354px;width:8px;height:8px"></div>
<div class="pk" style="left:1461px;top:380px;width:8px;height:8px"></div>
<div class="field" style="left:1292px;top:362px;width:169px;height:18px"></div>
<div class="mg" style="left:1284px;top:362px;width:8px;height:18px"></div>
<svg style="left:1292px;top:365px" width="6" height="8"><path d="M0.6 0V7.4H6" fill="none" stroke="#e0e0e3" stroke-width="1.2"/></svg>
<div class="pk" style="left:1297px;top:362px;width:4px;height:18px"></div>
<div class="pk" style="left:1297px;top:380px;width:1px;height:61px"></div>
<div class="pk" style="left:1300px;top:380px;width:1px;height:61px"></div>
<div class="val" style="left:1302px;top:364px;transform:scaleX(0.922);transform-origin:0 0">Option</div>
<svg style="left:1434px;top:362px" width="10" height="17"><path d="M1.6 4.5V15.6H8.7V1H4.2V12.6H6.4V4.5" fill="none" stroke="#f0f0f2" stroke-width="1.2"/></svg>
<div class="a" style="left:1469px;top:354px;width:2px;height:100px;background:#c8c8cc"></div>
<svg style="left:1287px;top:412px" width="9" height="9"><path d="M4.5 0V9M0 4.5H9" stroke="#c0c0c4" stroke-width="1.2"/></svg>
<div class="t" style="left:1302px;top:409px;font-size:16px;color:#c0c0c4;letter-spacing:-0.3px">Add Option</div>
<svg style="left:1435px;top:408px" width="8" height="17"><rect x="1.2" y="0.9" width="5.6" height="6.6" rx="0.6" fill="none" stroke="#8e8e92" stroke-width="1.2"/><rect x="1.2" y="9.3" width="5.6" height="6.6" rx="0.6" fill="none" stroke="#8e8e92" stroke-width="1.2"/><path d="M4 4V13" stroke="#8e8e92" stroke-width="1.2"/></svg>
<div class="a" style="left:1269px;top:731px;width:200px;height:50px;background:#F9D46A"></div>
<div class="t" style="left:1269px;top:748px;width:200px;text-align:center;font-size:16px;color:#333236;letter-spacing:-0.35px">Primary</div>
<div class="t" style="left:1269px;top:798px;width:200px;text-align:center;font-size:16px;color:#c8c8cc;letter-spacing:-0.5px">Secondary</div>

<div class="pk" style="left:345px;top:247px;width:90px;height:1px"></div>
<div class="pk" style="left:345px;top:269px;width:90px;height:1px"></div>
<div class="ann" style="left:226px;top:250px">$spacer * 7</div>
<div class="pk" style="left:345px;top:368px;width:112px;height:1px"></div>
<div class="pk" style="left:345px;top:376px;width:112px;height:1px"></div>
<div class="ann" style="left:226px;top:365px">$spacer * 4</div>
<div class="a" style="left:345px;top:745px;width:112px;height:1px;background:#1EBDE6"></div>
<div class="a" style="left:345px;top:808px;width:112px;height:1px;background:#1EBDE6"></div>
<div class="ann" style="left:226px;top:765px;color:#1EBDE6">$spacer * 13</div>
<div class="ann" style="left:1274px;top:282px">$spacer * 6</div>
<div class="pk" style="left:1283px;top:307px;width:1px;height:46px"></div>
<div class="pk" style="left:1268px;top:307px;width:1px;height:44px;opacity:.8"></div>
<div class="pk" style="left:1466px;top:318px;width:4px;height:4px"></div>
<div class="pk" style="left:1470px;top:318px;width:111px;height:1px"></div>
<div class="pk" style="left:1470px;top:321px;width:111px;height:1px"></div>
<div class="ann" style="left:1599px;top:310px">$spacer * 2</div>
<div class="pk" style="left:1466px;top:347px;width:4px;height:4px"></div>
<div class="pk" style="left:1470px;top:347px;width:111px;height:1px"></div>
<div class="pk" style="left:1470px;top:350px;width:111px;height:1px"></div>
<div class="ann" style="left:1599px;top:339px">$spacer * 2</div>
<div class="ann" style="left:1480px;top:362px">$spacer * 4</div>
<div class="ann" style="left:1289px;top:452px">$spacer * 2</div>

</div>
</body></html>
